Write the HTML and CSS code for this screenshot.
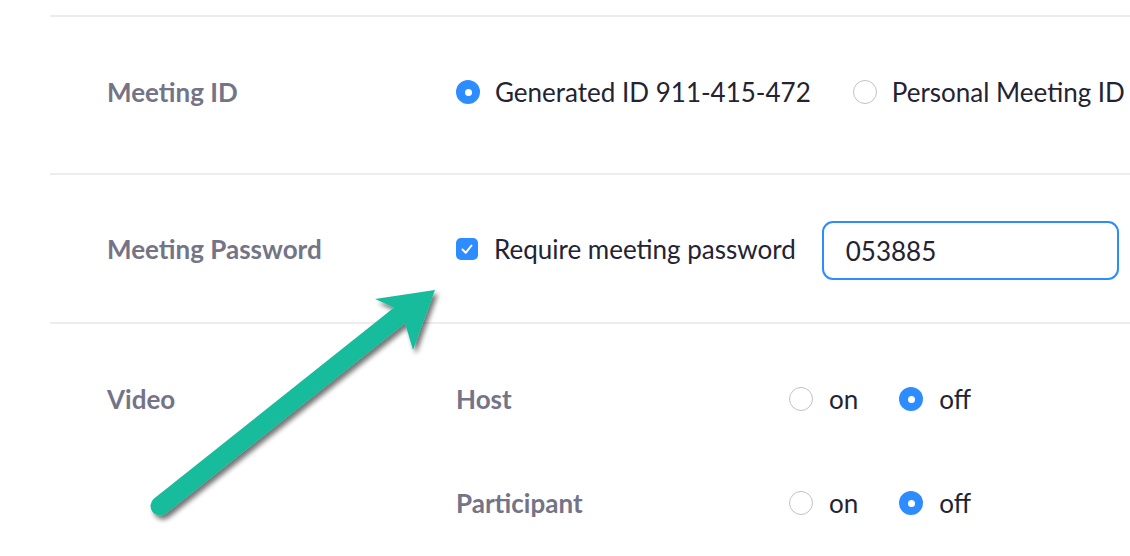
FILE: index.html
```html
<!DOCTYPE html>
<html>
<head>
<meta charset="utf-8">
<link rel="stylesheet" href="styles.css">
</head>
<body>
<div class="page">
  <div class="row row-id">
    <div class="label">Meeting ID</div>
    <div class="options">
      <span class="opt"><span class="radio on"></span>Generated ID 911-415-472</span>
      <span class="opt opt-personal"><span class="radio"></span>Personal Meeting ID</span>
    </div>
  </div>
  <div class="row row-pass">
    <div class="label">Meeting Password</div>
    <div class="options">
      <span class="opt"><span class="check"><svg viewBox="0 0 22 22" width="22" height="22"><path d="M6.5 11.5 L9.7 14.8 L15.5 7.5" fill="none" stroke="#fff" stroke-width="2" stroke-linecap="round" stroke-linejoin="round"/></svg></span>Require meeting password</span>
      <span class="input">053885</span>
    </div>
  </div>
  <div class="row row-video">
    <div class="label">Video</div>
    <div class="subrows">
      <div class="subrow">
        <div class="sublabel">Host</div>
        <span class="opt opt-on"><span class="radio"></span>on</span>
        <span class="opt"><span class="radio on"></span>off</span>
      </div>
      <div class="subrow">
        <div class="sublabel">Participant</div>
        <span class="opt opt-on"><span class="radio"></span>on</span>
        <span class="opt"><span class="radio on"></span>off</span>
      </div>
    </div>
  </div>
</div>
<svg class="arrow" width="1130" height="556" viewBox="0 0 1130 556">
  <defs>
    <filter id="sh" x="-20%" y="-20%" width="140%" height="140%">
      <feGaussianBlur in="SourceAlpha" stdDeviation="2.5"/>
      <feOffset dx="3" dy="4" result="b"/>
      <feComponentTransfer><feFuncA type="linear" slope="0.55"/></feComponentTransfer>
      <feMerge><feMergeNode/><feMergeNode in="SourceGraphic"/></feMerge>
    </filter>
  </defs>
  <g filter="url(#sh)">
    <line x1="160" y1="506" x2="400" y2="315" stroke="#14bc9b" stroke-width="19" stroke-linecap="round"/>
    <polygon points="375,299 435,290 413,350 405,323 395,308" fill="#14bc9b"/>
  </g>
</svg>
</body>
</html>
```

FILE: styles.css
```css
html, body {
  margin: 0;
  padding: 0;
  background: #ffffff;
}
body {
  width: 1130px;
  height: 556px;
  overflow: hidden;
  position: relative;
  font-family: Lato, "Open Sans", sans-serif;
  color: #232333;
}
.page {
  padding-top: 15px;
  padding-left: 50px;
}
.row {
  display: grid;
  grid-template-columns: 349px 1fr;
  align-items: center;
  box-sizing: border-box;
  border-top: 2px solid #ededf0;
  padding-left: 57px;
}
.row-id {
  height: 158px;
  padding-bottom: 6px;
}
.row-pass { height: 149px; }
.row-video {
  align-items: start;
  padding-top: 60px;
  height: 240px;
}
.label, .sublabel {
  font-weight: 700;
  font-size: 26px;
  color: #747487;
  line-height: 30px;
}
.options {
  display: flex;
  align-items: center;
}
.opt {
  display: inline-flex;
  align-items: center;
  font-size: 26px;
  line-height: 30px;
  white-space: nowrap;
}
.opt-personal { margin-left: 42px; }
.radio {
  width: 24px;
  height: 24px;
  border-radius: 50%;
  box-sizing: border-box;
  border: 1.5px solid #c2c2c6;
  background: #fff;
  margin-right: 15px;
  position: relative;
  flex: none;
}
.radio.on {
  border: none;
  background: #2d8cff;
}
.radio.on::after {
  content: "";
  position: absolute;
  left: 8.5px;
  top: 8.5px;
  width: 7px;
  height: 7px;
  border-radius: 50%;
  background: #fff;
}
.check {
  width: 22px;
  height: 22px;
  border-radius: 5px;
  background: #2d8cff;
  margin-right: 16px;
  display: inline-flex;
  flex: none;
}
.input {
  margin-left: 26px;
  margin-top: 4px;
  box-sizing: border-box;
  width: 297px;
  height: 59px;
  border: 2px solid #2d8cff;
  border-radius: 11px;
  padding-left: 22px;
  display: flex;
  align-items: center;
  font-size: 26px;
}
.subrows {
  display: flex;
  flex-direction: column;
  gap: 74px;
}
.subrow {
  display: flex;
  align-items: center;
}
.subrow .radio { margin-right: 16px; }
.sublabel {
  width: 333px;
}
.opt-on { margin-right: 41px; }
.arrow {
  position: absolute;
  left: 0;
  top: 0;
  pointer-events: none;
}
```
